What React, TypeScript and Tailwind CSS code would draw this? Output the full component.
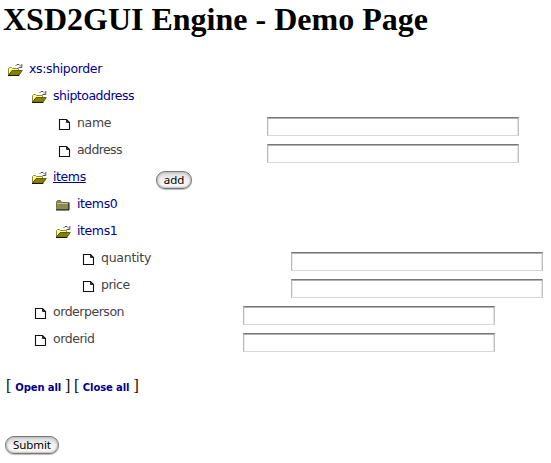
import React from "react";

type Kind = "open" | "closed" | "leaf";

function NodeIcon({ kind }: { kind: Kind }) {
  if (kind === "open") {
    return (
      <svg width="16" height="14" viewBox="0 0 16 14" className="shrink-0">
        <path d="M8.5 3 L10 1.5 H12 L14 3.5 M14.8 1 V4.5 H11.5" fill="none" stroke="#444" strokeWidth="0.9" />
        <path d="M1.5 12 V5.5 L2.5 4.5 H4.5 L5.5 5.5 H11.5 V8 H5 L1.5 12Z" fill="#ffff84" stroke="#8a8a3a" />
        <path d="M1.5 12.3 L5 7.5 H15.3 L12 12.3Z" fill="#848200" stroke="#4a4a00" strokeWidth="0.8" />
        <path d="M1 12.5 H12.3" stroke="#181800" />
      </svg>
    );
  }
  if (kind === "closed") {
    return (
      <svg width="16" height="14" viewBox="0 0 16 14" className="shrink-0">
        <path d="M1.5 11.5 V3.5 L2.5 2.5 H5.5 L6.5 4.5 H13.5 V11.5Z" fill="#8c8a5c" stroke="#7b7940" />
        <path d="M2 5.5 H13" stroke="#c0bf86" />
        <path d="M1 12 H14 V4.5" fill="none" stroke="#111" />
      </svg>
    );
  }
  return (
    <svg width="16" height="14" viewBox="0 0 16 14" className="shrink-0">
      <path d="M4.5 2.5 H11.5 L14.5 5.5 V12.5 H4.5Z" fill="#fff" stroke="#111" strokeWidth="1.1" />
      <path d="M11.5 2.5 V5.5 H14.5Z" fill="#333" stroke="#111" strokeWidth="0.8" />
    </svg>
  );
}

function TextField() {
  return (
    <input className="mt-[7px] block h-[19px] w-[252px] shrink-0 border border-t-[#777] border-r-[#c2c2c2] border-b-[#d6d6d6] border-l-[#b8b8b8] bg-white shadow-[inset_0_1px_0_#b0b0b0,inset_1px_0_0_#ececec,inset_-1px_0_0_#e4e4e4] outline-none" />
  );
}

function PushButton({ label, className }: { label: string; className: string }) {
  return (
    <button
      className={
        "flex h-[18px] items-center justify-center rounded-full border border-[#777] bg-linear-to-b from-[#d9d9d9] via-[#f2f2f2] to-[#fdfdfd] font-['Noto_Sans',sans-serif] text-black shadow-[0_1px_1px_#bbb,inset_0_0_2px_1px_#bbb] " +
        className
      }
    >
      {label}
    </button>
  );
}

interface RowProps {
  kind: Kind;
  label: string;
  indent: string;
  text: string;
  field?: boolean;
  add?: boolean;
}

const rows: RowProps[] = [
  { kind: "open", label: "xs:shiporder", indent: "pl-[7px]", text: "tracking-[-0.36px]" },
  { kind: "open", label: "shiptoaddress", indent: "pl-[31px]", text: "tracking-[-0.5px]" },
  { kind: "leaf", label: "name", indent: "pl-[55px]", text: "tracking-[-0.3px]", field: true },
  { kind: "leaf", label: "address", indent: "pl-[55px]", text: "tracking-[-0.6px]", field: true },
  { kind: "open", label: "items", indent: "pl-[31px]", text: "tracking-[-0.4px] underline", add: true },
  { kind: "closed", label: "items0", indent: "pl-[55px]", text: "tracking-[-0.4px]" },
  { kind: "open", label: "items1", indent: "pl-[55px]", text: "tracking-[-0.4px]" },
  { kind: "leaf", label: "quantity", indent: "pl-[79px]", text: "tracking-[-0.25px]", field: true },
  { kind: "leaf", label: "price", indent: "pl-[79px]", text: "tracking-[-0.5px]", field: true },
  { kind: "leaf", label: "orderperson", indent: "pl-[31px]", text: "tracking-[-0.47px]", field: true },
  { kind: "leaf", label: "orderid", indent: "pl-[31px]", text: "tracking-[-0.45px]", field: true },
];

function TreeRow({ kind, label, indent, text, field, add }: RowProps) {
  return (
    <div className={"flex h-[27px] items-start " + indent}>
      <div className="w-[22px] shrink-0 pt-[7px]">
        <NodeIcon kind={kind} />
      </div>
      <div className={field ? "w-[190px] shrink-0" : add ? "w-[103px] shrink-0" : ""}>
        <span className={"block w-fit pt-[3px] text-[12.5px] leading-[19px] " + (kind === "leaf" ? "text-[#444] " : "text-[#000090] ") + text}>
          {label}
        </span>
      </div>
      {field && <TextField />}
      {add && <PushButton label="add" className="mt-[7px] w-[36px] text-[11.5px]" />}
    </div>
  );
}

export default function App() {
  return (
    <div className="h-[463px] w-[551px] overflow-hidden bg-white font-['DejaVu_Sans',sans-serif]">
      <h1 className="h-[56px] whitespace-nowrap pl-[3px] font-['Liberation_Serif',serif] text-[32px] leading-[38px] font-bold text-black">
        XSD2GUI Engine - Demo Page
      </h1>
      {rows.map((row) => (
        <TreeRow key={row.label} {...row} />
      ))}
      <div className="flex h-[83px] items-baseline whitespace-pre pl-[6px] pt-[24px] font-['Liberation_Serif',serif] text-[16px] leading-[18px] text-black">
        <span>[ </span>
        <a className="font-['DejaVu_Sans',sans-serif] text-[10px] font-bold tracking-[-0.1px] text-[#000090]">Open all</a>
        <span className="tracking-[-0.2px]"> ] [ </span>
        <a className="font-['DejaVu_Sans',sans-serif] text-[10px] font-bold tracking-[-0.1px] text-[#000090]">Close all</a>
        <span> ]</span>
      </div>
      <div className="pl-[5px]">
        <PushButton label="Submit" className="w-[54px] text-[11.5px] tracking-[-0.1px]" />
      </div>
    </div>
  );
}
